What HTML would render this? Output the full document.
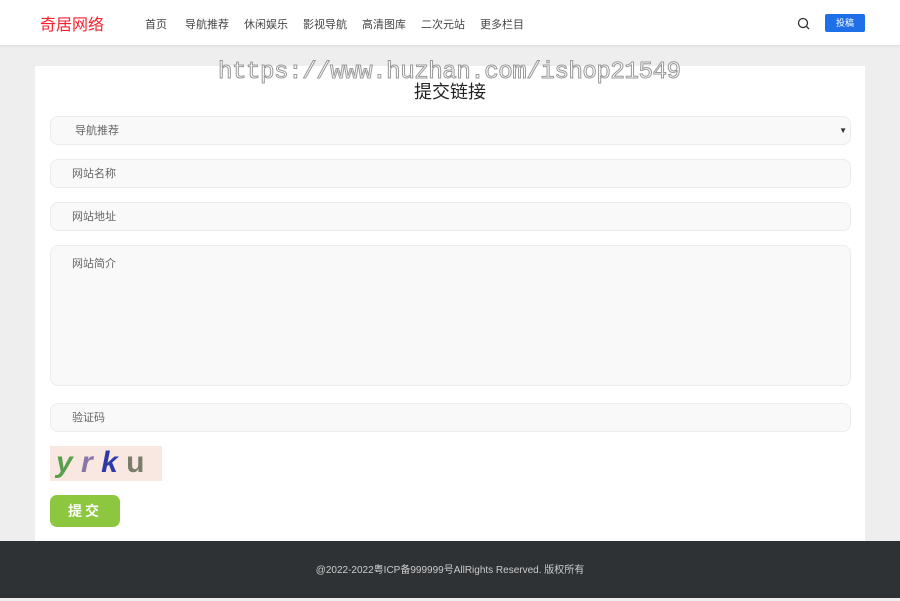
<!DOCTYPE html>
<html><head><meta charset="utf-8"><style>
*{box-sizing:border-box;margin:0;padding:0}
body{width:900px;height:598px;background:#eeeeee;font-family:"Liberation Sans","Noto Sans CJK SC",sans-serif;position:relative;overflow:hidden}
.hdr{position:absolute;left:0;top:0;width:900px;height:45px;background:#fff;box-shadow:0 1px 3px rgba(0,0,0,.08)}
.logo{position:absolute;left:40px;top:11px;font-size:16px;color:#f5222d}
.nav{position:absolute;left:145px;top:16px;font-size:11px;color:#444;white-space:nowrap}
.nav span{position:absolute;top:0}
.btn{position:absolute;left:825px;top:14px;width:40px;height:18px;background:#1e6fe8;border-radius:2px;color:#fff;font-size:9px;text-align:center;line-height:18px}
.card{position:absolute;left:35px;top:66px;width:830px;height:475px;background:#fff}
.wm{position:absolute;left:218px;top:59px;font-family:"Liberation Mono",monospace;font-size:24.2px;color:#fff;-webkit-text-stroke:1px #999;letter-spacing:-0.5px}
h2{position:absolute;left:0;width:830px;top:12px;text-align:center;font-weight:normal;font-size:18px;color:#222}
.f{position:absolute;left:15px;width:801px;background:#f9f9f9;border:1px solid #ececec;border-radius:8px;font-size:11px;color:#666;padding-left:21px}
.foot{position:absolute;left:0;top:541px;width:900px;height:57px;background:#2f3235;color:#ccc;font-size:10px;text-align:center;line-height:60px}
</style></head><body>
<div class="hdr"><div class="logo">奇居网络</div>
<div class="nav"><span style="left:0">首页</span><span style="left:40px">导航推荐</span><span style="left:99px">休闲娱乐</span><span style="left:158px">影视导航</span><span style="left:217px">高清图库</span><span style="left:276px">二次元站</span><span style="left:335px">更多栏目</span></div>
<svg style="position:absolute;left:797px;top:17px" width="13" height="13"><circle cx="6" cy="6" r="4.5" fill="none" stroke="#333" stroke-width="1.3"/><line x1="9.5" y1="9.5" x2="12" y2="12" stroke="#333" stroke-width="1.3"/></svg>
<div class="btn">投稿</div></div>
<div class="card">
<h2>提交链接</h2>
<div class="f" style="top:50px;height:29px;line-height:28px;padding-left:24px">导航推荐<span style="position:absolute;right:3px;font-size:8px;color:#333">▼</span></div>
<div class="f" style="top:93px;height:29px;line-height:28px">网站名称</div>
<div class="f" style="top:136px;height:29px;line-height:28px">网站地址</div>
<div class="f" style="top:179px;height:141px;padding-top:9px">网站简介</div>
<div class="f" style="top:337px;height:29px;line-height:28px">验证码</div>
<div style="position:absolute;left:15px;top:380px;width:112px;height:35px;background:#f9e8e2;font-weight:bold;font-size:30px;line-height:33px;font-style:italic">
<span style="color:#5a9e4e;margin-left:6px">y</span> <span style="color:#8a76a8">r</span> <span style="color:#2f3aa8">k</span> <span style="color:#7a7d6a;font-style:normal">u</span></div>
<div style="position:absolute;left:15px;top:429px;width:70px;height:32px;background:#8dc63f;border-radius:7px;color:#fff;font-size:14px;font-weight:bold;text-align:center;line-height:32px;letter-spacing:3px">提交</div>
</div>
<div class="wm">https://www.huzhan.com/ishop21549</div>
<div class="foot">@2022-2022粤ICP备999999号AllRights Reserved. 版权所有</div>
</body></html>
